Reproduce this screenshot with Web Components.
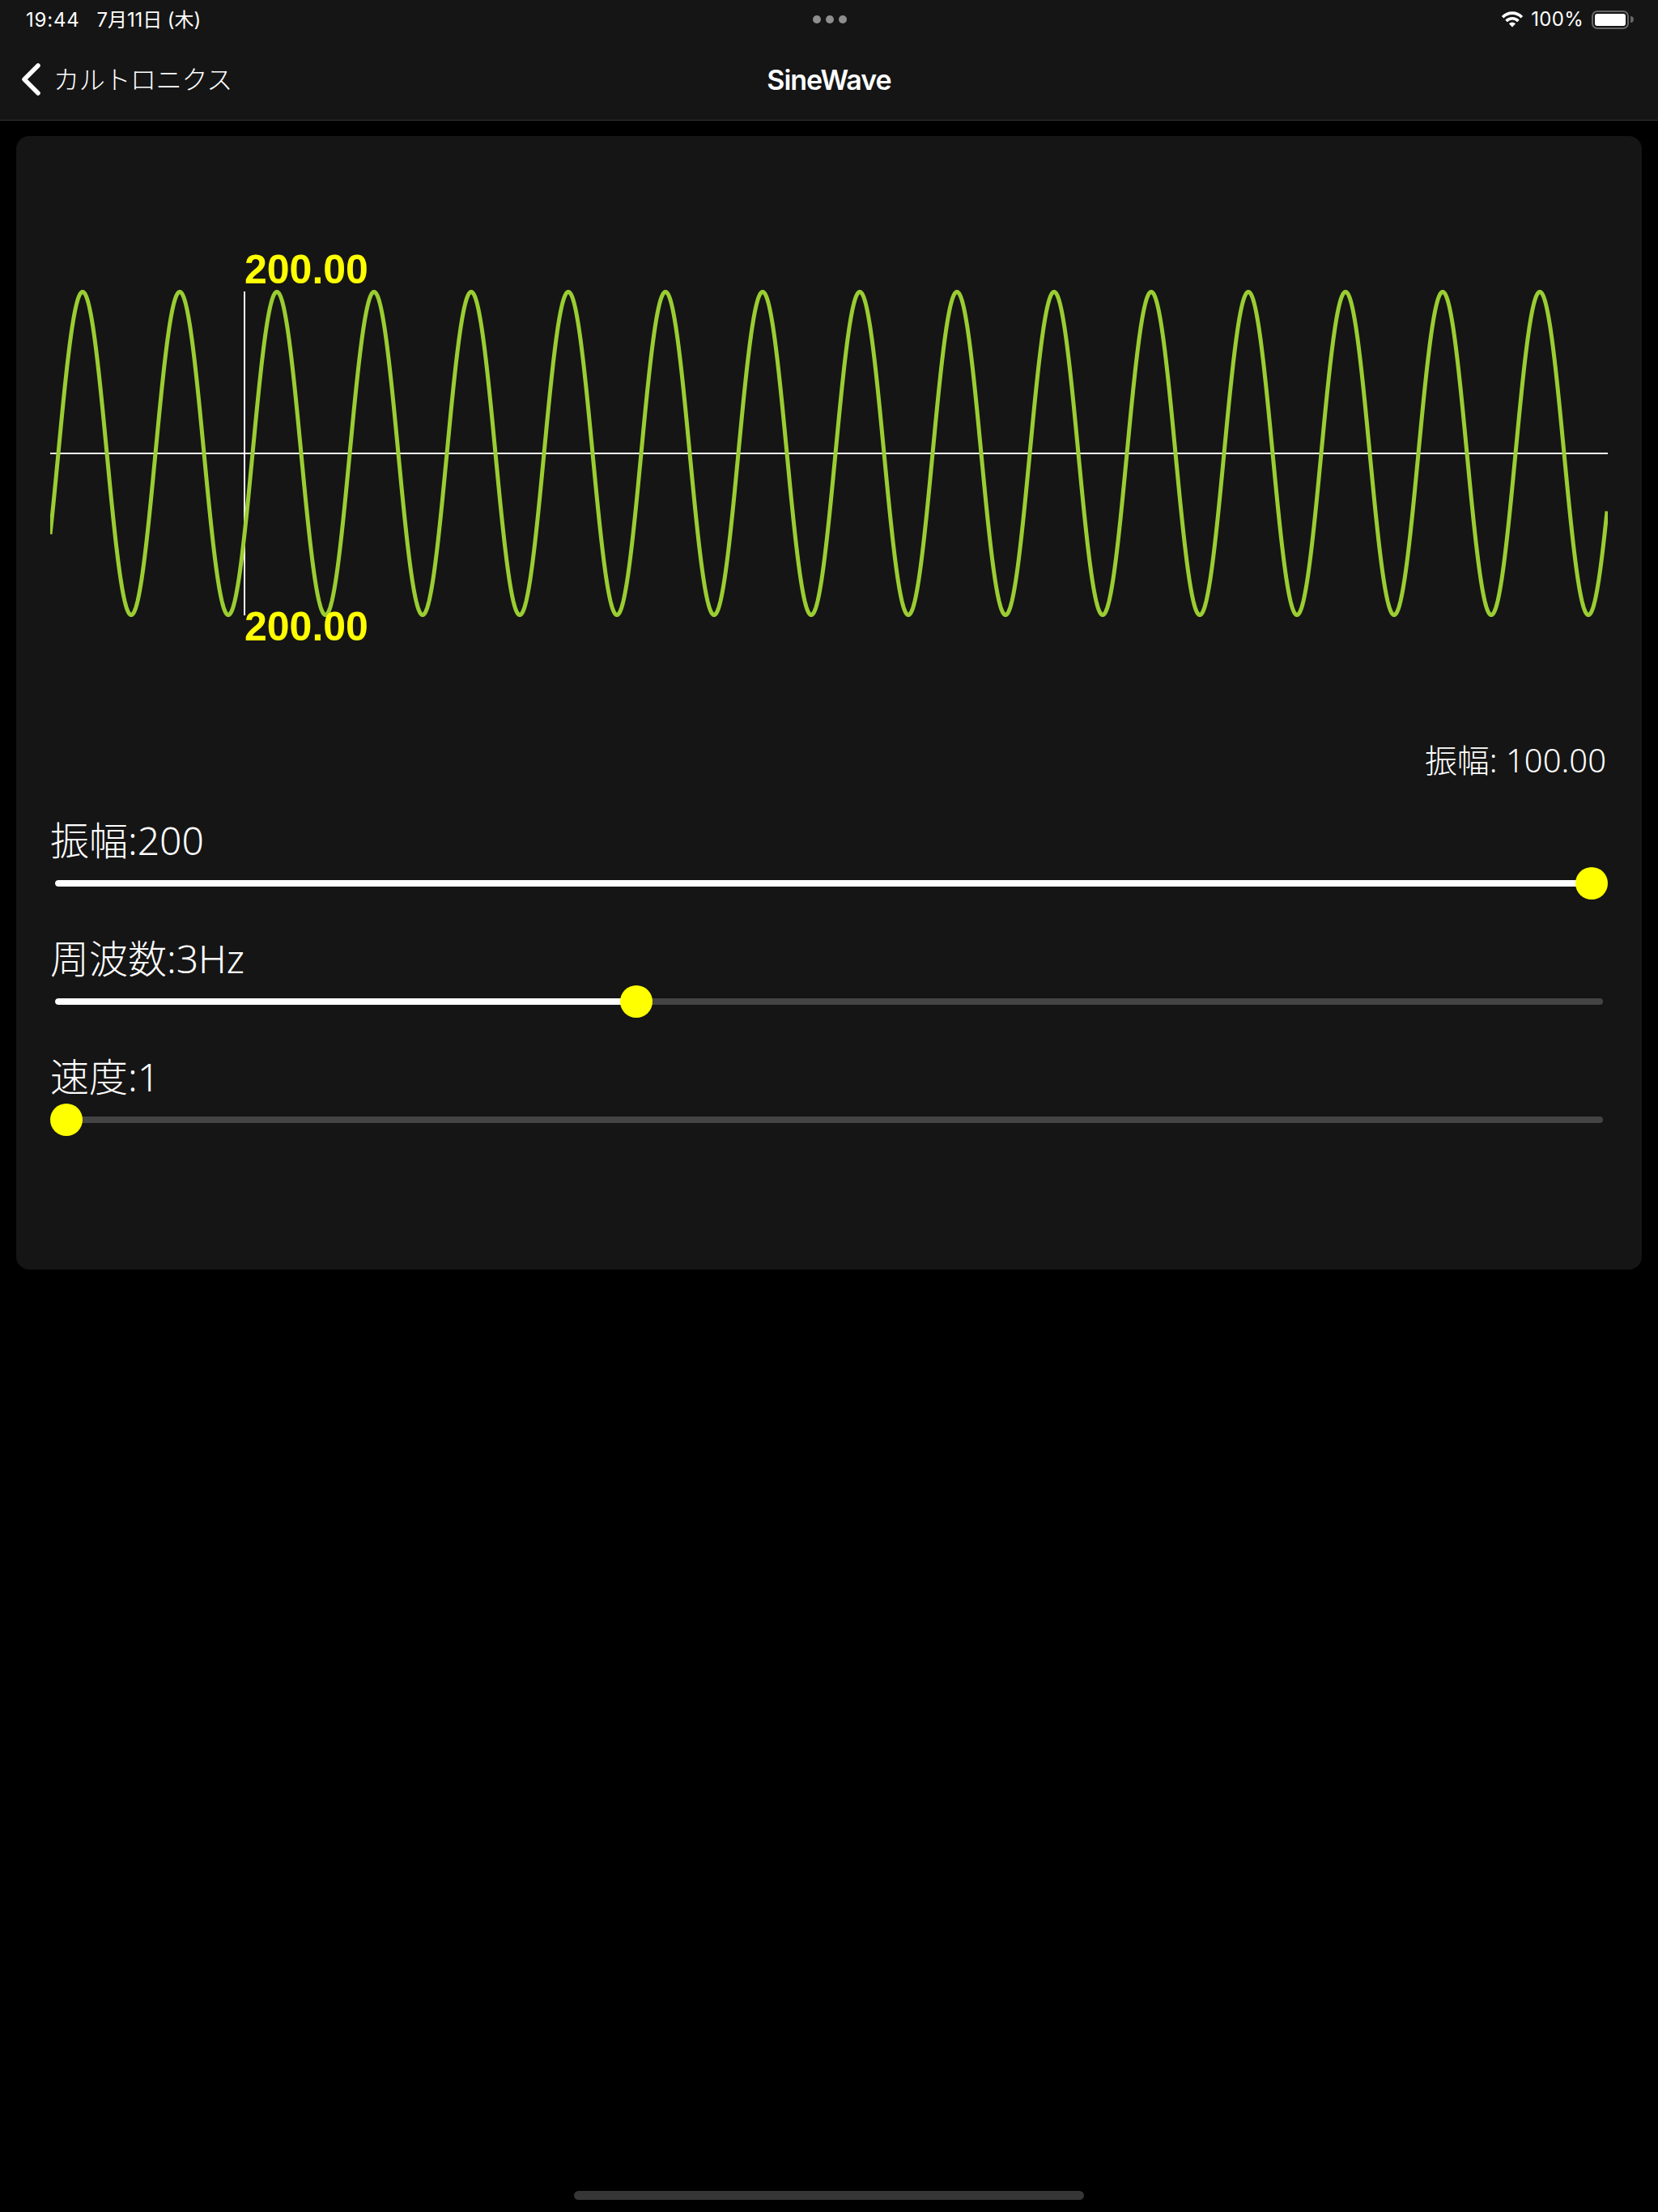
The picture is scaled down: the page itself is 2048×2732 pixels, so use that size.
<!DOCTYPE html>
<html lang="ja">
<head>
<meta charset="utf-8">
<title>SineWave</title>
<style>
html,body{margin:0;padding:0;background:#000;}
</style>
</head>
<body>
<sine-app>
  <app-header>
    <status-bar time="19:44" date="7月11日 (木)" battery="100%"></status-bar>
    <nav-bar back="カルトロニクス" title-text="SineWave"></nav-bar>
  </app-header>
  <panel-card>
    <wave-chart label="200.00"></wave-chart>
    <amp-readout>振幅: 100.00</amp-readout>
    <labeled-slider value="1">振幅:200</labeled-slider>
    <labeled-slider value="0.3737">周波数:3Hz</labeled-slider>
    <labeled-slider value="0">速度:1</labeled-slider>
  </panel-card>
  <home-indicator></home-indicator>
</sine-app>
<script>
function def(name, css, html, init){
  customElements.define(name, class extends HTMLElement{
    constructor(){
      super();
      this.attachShadow({mode:'open'}).innerHTML='<style>'+css+'</style>'+html;
    }
    connectedCallback(){ if(init) init(this, this.shadowRoot); }
  });
}
const CJK='"Noto Sans","Noto Sans CJK JP",sans-serif';
def('sine-app',`:host{display:flex;flex-direction:column;width:2048px;height:2732px;background:#000;color:#fff;overflow:hidden;font-family:${CJK};}`,'<slot></slot>');
def('app-header',`:host{display:flex;flex-direction:column;height:148px;background:#151515;border-bottom:1px solid #333;box-sizing:content-box;}`,'<slot></slot>');
def('status-bar',`
:host{display:grid;grid-template-columns:1fr auto 1fr;align-items:center;height:48px;padding:0 30px 0 32px;font:400 24px/30px Inter,"Noto Sans CJK JP",sans-serif;color:#fff;}
.l{display:flex;align-items:baseline;gap:21px;white-space:nowrap;margin-top:2px}
#t{letter-spacing:.8px}
#d{letter-spacing:-.1px}
.c{display:flex;gap:6px}
.c i{width:10px;height:10px;border-radius:50%;background:#8e8e8e;display:block}
.r{display:flex;justify-content:flex-end;align-items:center;gap:9px}
#b{letter-spacing:.3px}
.bat{display:flex;align-items:center;gap:2px;margin-left:1px}
.body{width:46px;height:23px;box-sizing:border-box;border:2px solid #666;border-radius:7px;padding:2px;}
.body b{display:block;width:100%;height:100%;background:#fff;border-radius:3px}
.nub{width:4px;height:8px;background:#666;border-radius:0 4px 4px 0}
svg{display:block}
`,`<div class="l"><span id="t"></span><span id="d"></span></div>
<div class="c"><i></i><i></i><i></i></div>
<div class="r">
<svg width="28" height="20" viewBox="0 0 28 20" fill="none" stroke="#fff" stroke-width="3.6">
<path d="M2.1 7.2A16.4 16.4 0 0 1 25.9 7.2"/>
<path d="M6.6 11.9A10.2 10.2 0 0 1 21.4 11.9"/>
<path d="M14 19.6L9.9 15.2A5.6 5.6 0 0 1 18.1 15.2Z" fill="#fff" stroke="none"/>
</svg>
<span id="b"></span>
<div class="bat"><div class="body"><b></b></div><div class="nub"></div></div>
</div>`,(h,s)=>{
  s.getElementById('t').textContent=h.getAttribute('time');
  s.getElementById('d').textContent=h.getAttribute('date');
  s.getElementById('b').textContent=h.getAttribute('battery');
});
def('nav-bar',`
:host{display:grid;grid-template-columns:1fr auto 1fr;align-items:center;height:100px;padding:0 27px;color:#fff;}
.b{display:flex;align-items:center;gap:15px;font:300 32px/40px "Noto Sans CJK JP",sans-serif;letter-spacing:-.3px;white-space:nowrap;}
.b span{position:relative;top:-2px}
.t{font:600 34px Inter,sans-serif;letter-spacing:-1px;}
svg{display:block}
`,`<div class="b"><svg width="24" height="40" viewBox="0 0 24 40" fill="none" stroke="#fff" stroke-width="5.5" stroke-linecap="round" stroke-linejoin="round"><path d="M20 3L3 20L20 37"/></svg><span id="bk"></span></div>
<div class="t" id="ti"></div><div></div>`,(h,s)=>{
  s.getElementById('bk').textContent=h.getAttribute('back');
  s.getElementById('ti').textContent=h.getAttribute('title-text');
});
def('panel-card',`
:host{display:flex;flex-direction:column;box-sizing:border-box;margin:19px 20px 0;height:1400px;padding:142px 42px 0;background:#151515;border-radius:16px;}
`,'<slot></slot>');
def('wave-chart',`
:host{display:block;height:500px;}
svg{display:block;overflow:visible}
text{font:700 50px "Liberation Sans",Arial,sans-serif;fill:#ff0;}
`,`<svg width="1924" height="500" viewBox="0 0 1924 500">
<defs><clipPath id="cp"><rect x="0" y="0" width="1924" height="500"/></clipPath></defs>
<rect x="0" y="249" width="1924" height="2" fill="#fff"/>
<rect x="239" y="50" width="2" height="400" fill="#fff"/>
<polyline id="w" clip-path="url(#cp)" fill="none" stroke="#9acd32" stroke-width="5" stroke-linejoin="round"/>
<text id="a" x="240" y="40"></text>
<text id="c" x="240" y="481"></text>
</svg>`,(h,s)=>{
  const p=[];
  for(let x=0;x<=1923;x+=1){
    const y=250-199.5*Math.sin(2*Math.PI*(x-10)/120);
    p.push(x+','+y.toFixed(2));
  }
  s.getElementById('w').setAttribute('points',p.join(' '));
  s.getElementById('a').textContent=h.getAttribute('label');
  s.getElementById('c').textContent=h.getAttribute('label');
});
def('amp-readout',`
:host{display:block;margin-top:101px;height:56px;line-height:55px;font-size:40px;font-weight:300;text-align:right;padding-right:2px;color:#fff;}
`,'<slot></slot>');
def('labeled-slider',`
:host{display:block;height:104px;margin-top:42px;color:#fff;}
.l{height:60px;line-height:58px;font-size:48px;font-weight:300;white-space:nowrap;}
.s{position:relative;height:44px;}
.tr{position:absolute;left:6px;right:6px;top:18px;height:8px;border-radius:4px;background:#444;overflow:hidden;}
.fl{height:100%;background:#fff;border-radius:4px;width:calc(var(--v) * 100%);}
.k{position:absolute;top:2px;left:calc(var(--v) * (100% - 40px));width:40px;height:40px;border-radius:50%;background:#ff0;}
`,`<div class="l"><slot></slot></div><div class="s"><div class="tr"><div class="fl"></div></div><div class="k"></div></div>`,(h,s)=>{
  h.style.setProperty('--v',h.getAttribute('value'));
});
def('home-indicator',`
:host{display:block;width:630px;height:11px;margin:auto auto 15px;border-radius:6px;background:#363636;}
`,'');
</script>
</body>
</html>
